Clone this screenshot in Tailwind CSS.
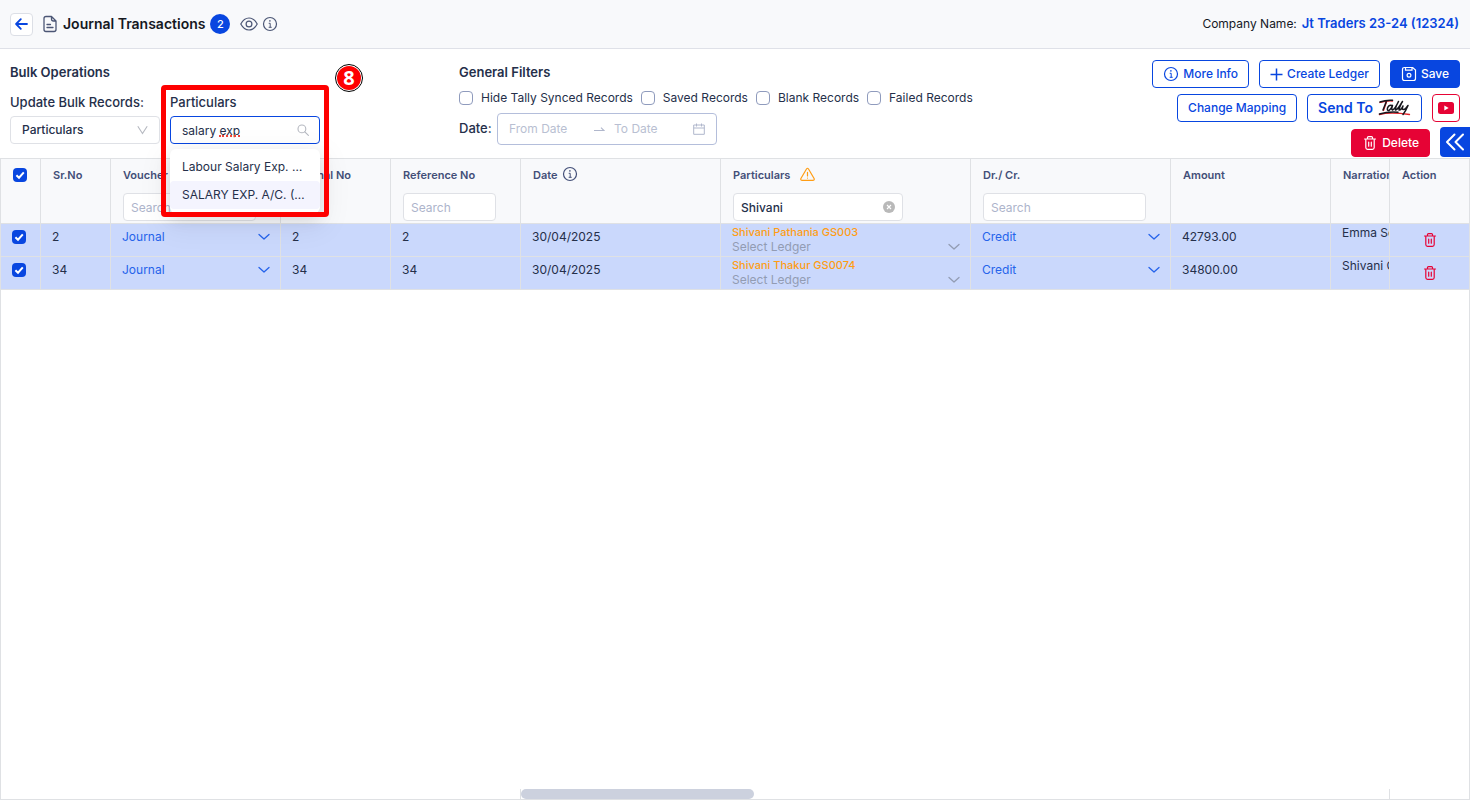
<!DOCTYPE html>
<html lang="en">
<head>
  <meta charset="UTF-8" />
  <meta name="viewport" content="width=device-width, initial-scale=1.0"/>
  <title>Journal Transactions</title>
  <script src="https://cdn.jsdelivr.net/npm/@tailwindcss/browser@4"></script>
</head>
<body class="h-screen flex flex-col overflow-hidden bg-white font-['Inter',sans-serif] text-xs text-[#252f4a]">
  <!-- Shared icons -->
  <svg class="hidden">
    <symbol id="i-info" viewBox="0 0 16 16" fill="none" stroke="currentColor">
      <circle cx="8" cy="8" r="6.5" stroke-width="1.2"/>
      <path d="M6.7 7.3h1.5v4M6.7 11.3h3" stroke-width="1"/>
      <circle cx="7.9" cy="4.9" r=".8" fill="currentColor" stroke="none"/>
    </symbol>
    <symbol id="i-trash" viewBox="0 0 16 16" fill="none" stroke="currentColor" stroke-width="1.2" stroke-linecap="round" stroke-linejoin="round">
      <path d="M2.5 4h11M5.5 4V2.6q0-1 1-1h3q1 0 1 1V4M3.8 4v8.6q0 1.8 1.8 1.8h4.8q1.8 0 1.8-1.8V4M6.7 7.2v4M9.3 7.2v4"/>
    </symbol>
    <symbol id="i-down" viewBox="0 0 12 12" fill="none" stroke="currentColor" stroke-width="1.3" stroke-linecap="round" stroke-linejoin="round">
      <path d="M1 3.5l5 4.5 5-4.5"/>
    </symbol>
    <symbol id="i-tick" viewBox="0 0 14 14" fill="none" stroke="#fff" stroke-width="2">
      <path d="M3.4 7.2l2.6 2.5 4.8-5.3"/>
    </symbol>
  </svg>

  <!-- Top bar -->
  <header class="h-[49px] shrink-0 flex items-center justify-between pl-[10px] pr-[11px] bg-[#f8f9fb] border-b border-[#dfe1e8]">
    <div class="flex items-center">
      <button type="button" aria-label="Back" class="w-[23px] h-[23px] grid place-items-center rounded bg-white border border-[#dcdfe6] text-[#0846e0]">
        <svg class="w-[14px] h-[14px]" viewBox="0 0 14 14" fill="none" stroke="currentColor" stroke-width="1.8" stroke-linecap="round" stroke-linejoin="round"><path d="M12 7H1.500M5.800 2.200L1.100 7l4.700 4.800"/></svg>
      </button>
      <svg class="w-4 h-[18px] ml-[9px] text-[#4b5675]" viewBox="0 0 16 18" fill="none" stroke="currentColor" stroke-width="1.3" stroke-linecap="round" stroke-linejoin="round"><path d="M9.5 1.500H4q-2 0-2 2v11q0 2 2 2h8q2 0 2-2V6zM9.500 1.500V4q0 2 2 2H14M5 9.500h3.500M5 12.500h6"/></svg>
      <h1 class="ml-[5px] text-sm font-semibold text-[#15181f]">Journal Transactions</h1>
      <span class="ml-[5px] w-5 h-5 rounded-full bg-[#0846e0] text-white text-[11px] font-medium grid place-items-center">2</span>
      <svg class="w-[18px] h-[14px] ml-[10px] text-[#4b5675]" viewBox="0 0 18 14" fill="none" stroke="currentColor" stroke-width="1.2"><path d="M.8 7Q4 1 9 1t8.200 6Q14 13 9 13T.8 7z"/><circle cx="9" cy="7" r="2.900"/></svg>
      <svg class="w-4 h-4 ml-1 text-[#4b5675]"><use href="#i-info"/></svg>
    </div>
    <div class="flex items-center gap-[5px] text-[#15181f]">
      <span>Company Name:</span>
      <a href="#" class="text-[13px] font-semibold text-[#0846e0]">Jt Traders 23-24 (12324)</a>
    </div>
  </header>

  <!-- Toolbar -->
  <section class="relative shrink-0 h-[109px] flex px-[10px] pt-[10px]">
    <div class="w-[449px] shrink-0 pt-[3px]">
      <h2 class="text-[13px] leading-5 font-semibold">Bulk Operations</h2>
      <div class="flex gap-[10px] pt-[10px]">
        <div class="w-[150px]">
          <label for="bulk-field" class="block h-5 text-[13px] leading-5 mb-1 font-medium whitespace-nowrap">Update Bulk Records:</label>
          <div class="relative">
            <select id="bulk-field" class="w-full h-7 appearance-none rounded border border-[#dfe1e6] bg-white pl-[11px] font-medium text-[#252f4a]">
              <option>Particulars</option>
            </select>
            <svg class="absolute right-3 top-[9px] w-[11px] h-[10px] text-[#b5b8c0] pointer-events-none" viewBox="0 0 11 10" fill="none" stroke="currentColor" stroke-width="1.1"><path d="M.8 1.200L5.500 8.500l4.700-7.300"/></svg>
          </div>
        </div>
        <div class="relative w-[150px]">
          <label for="bulk-value" class="block h-5 text-[13px] leading-5 mb-1 font-medium">Particulars</label>
          <input id="bulk-value" type="text" value="salary exp" class="w-full h-7 rounded border border-[#0846e0] bg-white pl-[11px] pr-8 outline-none">
          <span class="absolute left-[49px] top-[43px] w-[21px] border-b-2 border-dotted border-[#f0453a]"></span>
          <svg class="absolute right-[11px] top-8 w-3 h-3 text-[#b5b8c0]" viewBox="0 0 12 12" fill="none" stroke="currentColor" stroke-width="1.1" stroke-linecap="round"><circle cx="4.900" cy="4.900" r="3.900"/><path d="M7.800 7.800l3.600 3.600"/></svg>
          <!-- Suggestions -->
          <ul class="absolute z-20 left-0 top-[57px] w-full py-1 bg-white rounded-md shadow-[0_6px_16px_rgba(0,0,0,0.10),0_9px_28px_8px_rgba(0,0,0,0.05)]">
            <li class="h-7 leading-7 px-3 truncate">Labour Salary Exp. Wages</li>
            <li class="h-7 leading-7 px-3 truncate rounded bg-[#f4f4fe]">SALARY EXP. A/C. (Wages)</li>
          </ul>
          <!-- Step marker -->
          <div class="absolute z-30 -left-[9px] -top-[7px] w-[168px] h-[132px] border-[5px] border-[#fe0000] rounded pointer-events-none"></div>
          <div class="absolute z-30 left-[165px] -top-[28px] w-7 h-7 rounded-full border border-black bg-white p-px">
            <div class="w-full h-full rounded-full bg-[#fe0000] text-white text-xl leading-6 font-bold font-['Open_Sans',sans-serif] text-center">8</div>
          </div>
        </div>
      </div>
    </div>

    <div class="flex-1 pt-[3px]">
      <h2 class="text-[13px] leading-5 font-semibold">General Filters</h2>
      <div class="flex items-center gap-2 h-5 mt-[6px] whitespace-nowrap">
        <label class="flex items-center gap-2"><input type="checkbox" class="appearance-none w-[14px] h-[14px] rounded border border-[#8f9bbd] bg-white">Hide Tally Synced Records</label>
        <label class="flex items-center gap-2"><input type="checkbox" class="appearance-none w-[14px] h-[14px] rounded border border-[#8f9bbd] bg-white">Saved Records</label>
        <label class="flex items-center gap-2"><input type="checkbox" class="appearance-none w-[14px] h-[14px] rounded border border-[#8f9bbd] bg-white">Blank Records</label>
        <label class="flex items-center gap-2"><input type="checkbox" class="appearance-none w-[14px] h-[14px] rounded border border-[#8f9bbd] bg-white">Failed Records</label>
      </div>
      <div class="flex items-center mt-[5px]">
        <label for="date-from" class="w-[38px] text-[13px] font-medium">Date:</label>
        <div class="w-[220px] h-8 flex items-center rounded border border-[#b4bedb] bg-white px-[11px]">
          <input id="date-from" type="text" placeholder="From Date" class="w-[84px] outline-none placeholder:text-[#b9bfd2]">
          <svg class="w-3 h-3 mr-[9px] text-[#b0b7cc]" viewBox="0 0 12 12" fill="none" stroke="currentColor" stroke-width="1.100"><path d="M1 7.500h10L8 4.700"/></svg>
          <input type="text" aria-label="To Date" placeholder="To Date" class="w-[79px] outline-none placeholder:text-[#b9bfd2]">
          <svg class="w-3 h-3 text-[#b0b7cc]" viewBox="0 0 12 12" fill="none" stroke="currentColor"><path d="M.7 2h10.600v9.300H.7zM.7 5h10.600M3.500.5v3M8.500.5v3"/></svg>
        </div>
      </div>
    </div>

    <div class="flex flex-col items-end pt-px font-medium">
      <div class="flex gap-[10px]">
        <button type="button" class="h-7 px-[10px] flex items-center gap-1 rounded border border-[#0846e0] text-[#0846e0] bg-white"><svg class="w-4 h-4"><use href="#i-info"/></svg>More Info</button>
        <button type="button" class="h-7 px-[10px] flex items-center gap-1 rounded border border-[#0846e0] text-[#0846e0] bg-white"><svg class="w-[13px] h-[13px]" viewBox="0 0 13 13" stroke="currentColor" stroke-width="1.500"><path d="M6.500.5v12M.5 6.500h12"/></svg>Create Ledger</button>
        <button type="button" class="h-7 px-[10px] flex items-center gap-1 rounded border border-[#0846e0] text-white bg-[#0846e0]"><svg class="w-4 h-4" viewBox="0 0 16 16" fill="none" stroke="currentColor" stroke-width="1.200"><path d="M3.500 1.500h8.200l2.800 2.600v8.400q0 2-2 2h-9q-2 0-2-2v-9q0-2 2-2zM4.500 1.500v2.700h6.500V1.500"/><circle cx="8" cy="9.300" r="1.900"/></svg>Save</button>
      </div>
      <div class="flex gap-[10px] mt-[6px]">
        <button type="button" class="h-7 px-[10px] rounded border border-[#0846e0] text-[#0846e0] bg-white">Change Mapping</button>
        <button type="button" class="h-7 px-[10px] flex items-center gap-[5px] rounded border border-[#0846e0] text-[#0846e0] bg-white text-sm font-semibold">Send To
          <svg class="w-[33px] h-[18px]" viewBox="0 0 33 18" fill="none" stroke-linecap="round" stroke-linejoin="round">
            <g stroke="#e02128" stroke-width="1.300"><path d="M2 3.500Q9 1.500 14.500 2M8.500 3L5.500 11.500M1.500 15.500Q12 12.800 31.500 15.500"/></g>
            <g stroke="#16161c" stroke-width="1.500"><path d="M2 3Q8 .8 14.500 1.300M8.500 2Q7 6 5 11M14 6.500q-3-1-4.500 2.500-.7 3 1.500 2.500Q13 10.500 14.500 6.500q-1.500 4 0 4.500Q17 10 20.500 2.500 17 9 17.500 11q2 0 7-8.500Q21 9 21 11q2 .5 4-4-1.500 3.500.5 3.500T30 6.500Q28 11.500 25 15.500M1.500 15Q10 12.500 20 13.300"/></g>
          </svg>
        </button>
        <button type="button" aria-label="Watch video" class="w-7 h-7 grid place-items-center rounded border border-[#e60335] bg-white">
          <svg class="w-4 h-3" viewBox="0 0 16 12"><rect width="16" height="12" rx="2.500" fill="#e60335"/><path d="M6.300 3.500v5l4.400-2.500z" fill="#fff"/></svg>
        </button>
      </div>
      <button type="button" class="h-7 px-[10px] mt-[7px] mr-[30px] flex items-center gap-1 rounded border border-[#e60335] text-white bg-[#e60335]"><svg class="w-4 h-4"><use href="#i-trash"/></svg>Delete</button>
    </div>
    <button type="button" aria-label="Expand panel" class="absolute right-0 bottom-px w-[30px] h-[30px] grid place-items-center rounded-l bg-[#0846e0] text-white">
      <svg class="w-5 h-[18px]" viewBox="0 0 20 18" fill="none" stroke="currentColor" stroke-width="2" stroke-linecap="round" stroke-linejoin="round"><path d="M9.500 1.500L2 9l7.500 7.500M18 1.500L10.500 9l7.500 7.500"/></svg>
    </button>
  </section>

  <!-- Grid -->
  <main class="flex-1 min-h-0 flex flex-col justify-between border border-[#dfe1e4]">
    <table class="w-full table-fixed border-separate border-spacing-0 text-left">
      <colgroup>
        <col class="w-[40px]"><col class="w-[70px]"><col class="w-[170px]"><col class="w-[110px]"><col class="w-[130px]"><col class="w-[200px]"><col class="w-[250px]"><col class="w-[200px]"><col class="w-[160px]"><col><col class="w-[79px]">
      </colgroup>
      <thead class="bg-[#f8f9fb] text-[11px] leading-4 text-[#434f78] [&_th]:h-[65px] [&_th]:align-top [&_th]:font-semibold [&_th]:pl-3 [&_th]:pt-2 [&_th]:border-b [&_th]:border-r [&_th]:border-[#dfe1e4]">
        <tr>
          <th><label class="grid w-[14px] mt-px"><input type="checkbox" checked aria-label="Select all" class="[grid-area:1/1] appearance-none w-[14px] h-[14px] rounded bg-[#0846e0]"><svg class="[grid-area:1/1] w-[14px] h-[14px]"><use href="#i-tick"/></svg></label></th>
          <th>Sr.No</th>
          <th><div class="h-[26px]">Voucher Type</div><input type="text" aria-label="Search voucher type" placeholder="Search" class="w-[133px] h-7 rounded border border-[#dfe1e6] bg-white px-[7px] text-xs font-normal placeholder:text-[#adb4cb]"></th>
          <th>Journal No</th>
          <th><div class="h-[26px]">Reference No</div><input type="text" aria-label="Search reference no" placeholder="Search" class="w-[93px] h-7 rounded border border-[#dfe1e6] bg-white px-[7px] text-xs font-normal placeholder:text-[#adb4cb]"></th>
          <th><div class="flex gap-1">Date<svg class="w-4 h-4 -mt-px"><use href="#i-info"/></svg></div></th>
          <th>
            <div class="h-[26px] flex gap-[10px]">Particulars<svg class="w-[15px] h-[15px] text-[#ff9d14]" viewBox="0 0 15 15" fill="none" stroke="currentColor" stroke-width="1.200" stroke-linecap="round" stroke-linejoin="round"><path d="M6.500 2q1-1.500 2 0l5.600 9.500q.6 1.800-1.300 1.800H2.200q-1.900 0-1.300-1.800zM7.500 5.300v3.700M7.500 11v.1"/></svg></div>
            <div class="relative w-[170px]"><input type="text" aria-label="Search particulars" value="Shivani" class="w-full h-7 rounded border border-[#dfe1e6] bg-white px-[7px] text-xs font-medium text-[#252f4a]"><svg class="absolute right-2 top-2 w-3 h-3" viewBox="0 0 12 12"><circle cx="6" cy="6" r="6" fill="#b9b9b9"/><path d="M4 4l4 4M8 4L4 8" stroke="#fff" stroke-width="1.100"/></svg></div>
          </th>
          <th><div class="h-[26px]">Dr./ Cr.</div><input type="text" aria-label="Search Dr./ Cr." placeholder="Search" class="w-[163px] h-7 rounded border border-[#dfe1e6] bg-white px-[7px] text-xs font-normal placeholder:text-[#adb4cb]"></th>
          <th>Amount</th>
          <th class="overflow-hidden whitespace-nowrap">Narration</th>
          <th class="border-r-0!">Action</th>
        </tr>
      </thead>
      <tbody class="bg-[#cad8fc] leading-5 [&_td]:h-[33px] [&_td]:align-top [&_td]:pl-[11px] [&_td]:pt-[3px] [&_td]:border-b [&_td]:border-r [&_td]:border-[#dfe1e4]">
        <tr>
          <td><label class="grid w-[14px] mt-[3px]"><input type="checkbox" checked aria-label="Select row 2" class="[grid-area:1/1] appearance-none w-[14px] h-[14px] rounded bg-[#0846e0]"><svg class="[grid-area:1/1] w-[14px] h-[14px]"><use href="#i-tick"/></svg></label></td>
          <td>2</td>
          <td><div class="relative pr-[10px] text-[#2563eb]"><select aria-label="Voucher type" class="block w-full h-5 appearance-none"><option>Journal</option></select><svg class="absolute right-[10px] top-1 w-3 h-3 pointer-events-none"><use href="#i-down"/></svg></div></td>
          <td>2</td>
          <td>2</td>
          <td>30/04/2025</td>
          <td class="pt-0!">
            <div class="h-[15px] leading-4 text-[11px] font-medium text-[#ff9d14]">Shivani Pathania GS003</div>
            <div class="relative pr-[10px] text-[#929cb3]"><select aria-label="Ledger" class="block w-full h-[15px] leading-[15px] appearance-none"><option>Select Ledger</option></select><svg class="absolute right-[10px] top-[2px] w-3 h-3 pointer-events-none"><use href="#i-down"/></svg></div>
          </td>
          <td><div class="relative pr-[10px] text-[#2563eb]"><select aria-label="Dr./ Cr." class="block w-full h-5 appearance-none"><option>Credit</option></select><svg class="absolute right-[10px] top-1 w-3 h-3 pointer-events-none"><use href="#i-down"/></svg></div></td>
          <td>42793.00</td>
          <td class="pt-0! leading-[18px] overflow-hidden whitespace-nowrap">Emma Solutions</td>
          <td class="pl-0! border-r-0!"><button type="button" aria-label="Delete row" class="mx-auto mt-[5px] block w-4 h-4 text-[#e60335]"><svg class="w-4 h-4"><use href="#i-trash"/></svg></button></td>
        </tr>
        <tr>
          <td><label class="grid w-[14px] mt-[3px]"><input type="checkbox" checked aria-label="Select row 34" class="[grid-area:1/1] appearance-none w-[14px] h-[14px] rounded bg-[#0846e0]"><svg class="[grid-area:1/1] w-[14px] h-[14px]"><use href="#i-tick"/></svg></label></td>
          <td>34</td>
          <td><div class="relative pr-[10px] text-[#2563eb]"><select aria-label="Voucher type" class="block w-full h-5 appearance-none"><option>Journal</option></select><svg class="absolute right-[10px] top-1 w-3 h-3 pointer-events-none"><use href="#i-down"/></svg></div></td>
          <td>34</td>
          <td>34</td>
          <td>30/04/2025</td>
          <td class="pt-0!">
            <div class="h-[15px] leading-4 text-[11px] font-medium text-[#ff9d14]">Shivani Thakur GS0074</div>
            <div class="relative pr-[10px] text-[#929cb3]"><select aria-label="Ledger" class="block w-full h-[15px] leading-[15px] appearance-none"><option>Select Ledger</option></select><svg class="absolute right-[10px] top-[2px] w-3 h-3 pointer-events-none"><use href="#i-down"/></svg></div>
          </td>
          <td><div class="relative pr-[10px] text-[#2563eb]"><select aria-label="Dr./ Cr." class="block w-full h-5 appearance-none"><option>Credit</option></select><svg class="absolute right-[10px] top-1 w-3 h-3 pointer-events-none"><use href="#i-down"/></svg></div></td>
          <td>34800.00</td>
          <td class="pt-0! leading-[18px] overflow-hidden whitespace-nowrap">Shivani Gupta</td>
          <td class="pl-0! border-r-0!"><button type="button" aria-label="Delete row" class="mx-auto mt-[5px] block w-4 h-4 text-[#e60335]"><svg class="w-4 h-4"><use href="#i-trash"/></svg></button></td>
        </tr>
      </tbody>
    </table>

    <!-- Horizontal scrollbar between the pinned columns -->
    <div class="flex h-[10px]">
      <div class="w-[520px] border-r border-[#dfe1e4]"></div>
      <div class="flex-1 border-r border-[#dfe1e4]"><div class="w-[233px] h-full rounded-full bg-[#ccd1de]"></div></div>
      <div class="w-[79px]"></div>
    </div>
  </main>
</body>
</html>
